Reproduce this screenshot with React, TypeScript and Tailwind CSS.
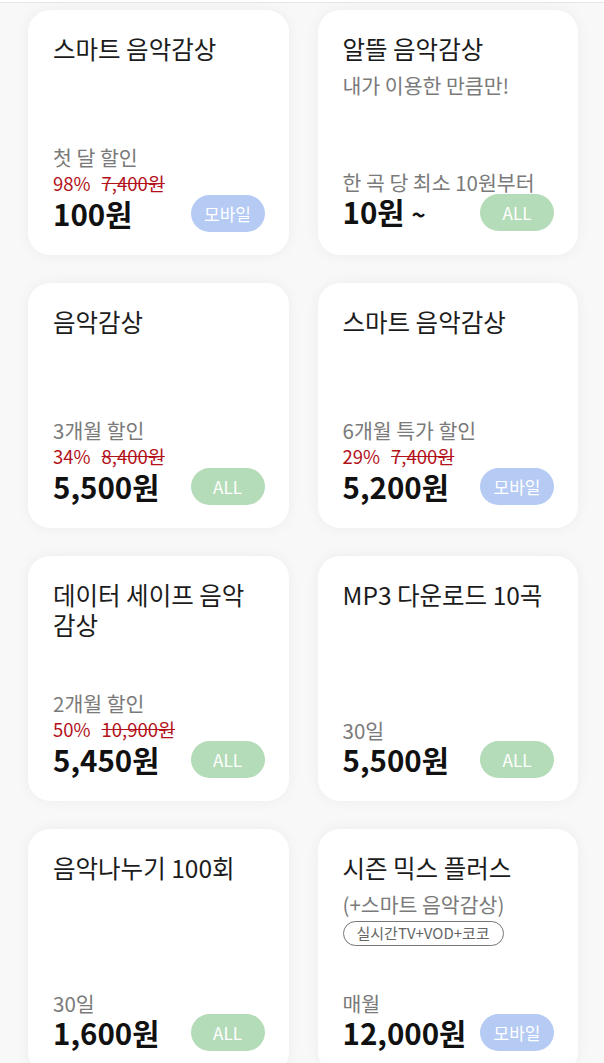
import React from "react";

type Plan = {
  title: string[];
  sub?: string;
  tag?: string;
  label: string;
  rate?: string;
  origin?: string;
  price: string;
  suffix?: string;
  badge: "mobile" | "all";
};

const PLANS: Plan[] = [
  { title: ["스마트 음악감상"], label: "첫 달 할인", rate: "98%", origin: "7,400원", price: "100원", badge: "mobile" },
  { title: ["알뜰 음악감상"], sub: "내가 이용한 만큼만!", label: "한 곡 당 최소 10원부터", price: "10원", suffix: "~", badge: "all" },
  { title: ["음악감상"], label: "3개월 할인", rate: "34%", origin: "8,400원", price: "5,500원", badge: "all" },
  { title: ["스마트 음악감상"], label: "6개월 특가 할인", rate: "29%", origin: "7,400원", price: "5,200원", badge: "mobile" },
  { title: ["데이터 세이프 음악", "감상"], label: "2개월 할인", rate: "50%", origin: "10,900원", price: "5,450원", badge: "all" },
  { title: ["MP3 다운로드 10곡"], label: "30일", price: "5,500원", badge: "all" },
  { title: ["음악나누기 100회"], label: "30일", price: "1,600원", badge: "all" },
  { title: ["시즌 믹스 플러스"], sub: "(+스마트 음악감상)", tag: "실시간TV+VOD+코코", label: "매월", price: "12,000원", badge: "mobile" },
];

function Badge({ kind }: { kind: Plan["badge"] }) {
  return (
    <span
      className={
        kind === "mobile"
          ? "shrink-0 flex items-center justify-center w-[74px] h-[37px] rounded-full bg-[#b5cbf4] text-white text-[17px]"
          : "shrink-0 flex items-center justify-center w-[74px] h-[37px] rounded-full bg-[#b5dcb9] text-white text-[17px]"
      }
    >
      {kind === "mobile" ? "모바일" : "ALL"}
    </span>
  );
}

function PlanCard({ plan }: { plan: Plan }) {
  return (
    <div className="h-[245px] rounded-[22px] bg-white shadow-[0_0_14px_rgba(0,0,0,0.05)] pl-[25px] pr-[24px] pt-[24px] pb-[23px] flex flex-col justify-between">
      <div>
        {plan.title.map((line) => (
          <p key={line} className="text-[24.5px] leading-[30px] text-[#1c1c1c]">
            {line}
          </p>
        ))}
        {plan.sub && (
          <p className="mt-[6px] text-[20.5px] leading-[30px] text-[#7a7a7a]">{plan.sub}</p>
        )}
        {plan.tag && (
          <span className="inline-flex items-center mt-[2px] h-[25px] px-[13px] rounded-full border border-[#777] text-[15px] text-[#666]">
            {plan.tag}
          </span>
        )}
      </div>
      <div>
        {plan.rate ? (
          <>
            <p className="text-[20.5px] leading-[30px] text-[#7a7a7a]">{plan.label}</p>
            <p className="text-[18.5px] leading-[23px] text-[#b3121b]">
              {plan.rate}
              <span className="ml-[11px] line-through">{plan.origin}</span>
            </p>
          </>
        ) : (
          <p className="text-[20.5px] leading-[21px] text-[#7a7a7a]">{plan.label}</p>
        )}
        <div className="flex items-center justify-between">
          <p className="text-[29.5px] leading-[37px] font-bold text-[#111] whitespace-nowrap">
            {plan.price}
            {plan.suffix && <span className="ml-[7px] text-[24px]">{plan.suffix}</span>}
          </p>
          <Badge kind={plan.badge} />
        </div>
      </div>
    </div>
  );
}

export default function App() {
  return (
    <div
      className="min-h-[1063px] bg-[#f8f8f8]"
      style={{ fontFamily: '"Noto Sans CJK KR", "Noto Sans", sans-serif' }}
    >
      <div className="h-[2px] bg-white" />
      <div className="border-t border-[#e6e6e6] pt-[7px] pl-[28px] pr-[26px] grid grid-cols-2 gap-x-[29px] gap-y-[28px]">
        {PLANS.map((plan, i) => (
          <PlanCard key={i} plan={plan} />
        ))}
      </div>
    </div>
  );
}
